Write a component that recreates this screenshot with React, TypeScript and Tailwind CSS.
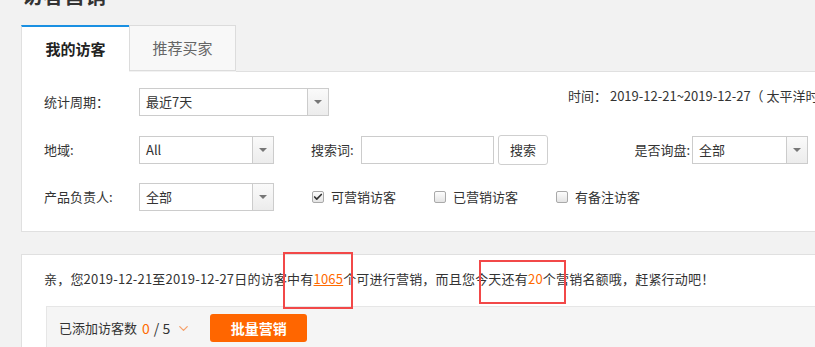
import { Check, ChevronDown } from 'lucide-react'

// Native-looking select with the grey arrow box on the right
function Select({ value, width }: { value: string; width: string }) {
  return (
    <div className={`flex h-[28px] ${width} border border-[#cccccc] bg-white`}>
      <div className="flex flex-1 items-center pl-[6px] text-[13px] text-[#333]">{value}</div>
      <div className="flex w-[21px] items-center justify-center border-l border-[#cccccc] bg-gradient-to-b from-[#fafafa] to-[#ececec]">
        <span className="h-0 w-0 border-x-[4px] border-t-[4px] border-x-transparent border-t-[#777]" />
      </div>
    </div>
  )
}

function CheckItem({ label, checked }: { label: string; checked?: boolean }) {
  return (
    <div className="flex w-[122px] items-center">
      <span className="flex h-[12px] w-[12px] items-center justify-center rounded-[2px] border border-[#a9a9a9] bg-gradient-to-b from-[#fdfdfd] to-[#e4e4e4]">
        {checked && <Check className="h-[10px] w-[10px] text-[#333]" strokeWidth={4} />}
      </span>
      <span className="ml-[7px] text-[13px] text-[#333]">{label}</span>
    </div>
  )
}

export default function App() {
  return (
    <div
      className="relative h-[347px] w-[815px] overflow-hidden bg-[#f2f2f2]"
      style={{ fontFamily: '"Noto Sans CJK SC", "Noto Sans", sans-serif' }}
    >
      {/* page title, cut off at the top */}
      <h1 className="ml-[22px] mt-[-20px] h-[45px] text-[21px] font-bold leading-[28px] text-[#333]">访客营销</h1>

      {/* --- filter panel --- */}
      <div className="ml-[21px] w-[900px]">
        <div className="flex h-[47px]">
          <div className="flex w-[108px] items-center justify-center border-l border-t-2 border-l-[#e0e0e0] border-t-[#1a90e2] bg-white text-[15px] font-bold text-[#222]">
            我的访客
          </div>
          <div className="flex h-[46px] w-[107px] items-center justify-center border border-[#dcdcdc] bg-[#f8f8f8] text-[15px] text-[#666]">
            推荐买家
          </div>
          <div className="flex-1 border-b border-[#e0e0e0]" />
        </div>

        <div className="h-[160px] border-x border-b border-[#e0e0e0] bg-white pl-[22px] pt-[16px]">
          <div className="flex items-start">
            <div className="flex h-[28px] w-[95px] items-center text-[13px] text-[#333]">统计周期：</div>
            <Select value="最近7天" width="w-[190px]" />
            <div className="ml-[239px] mt-[-2px] whitespace-nowrap text-[13px] leading-[20px] text-[#333]">
              时间： 2019-12-21~2019-12-27（ 太平洋时间）
            </div>
          </div>

          <div className="mt-[19px] flex items-center">
            <div className="w-[95px] text-[13px] text-[#333]">地域:</div>
            <Select value="All" width="w-[135px]" />
            <div className="ml-[37px] w-[50px] text-[13px] text-[#333]">搜索词:</div>
            <div className="h-[28px] w-[133px] border border-[#cccccc]" />
            <div className="ml-[4px] flex h-[30px] w-[50px] items-center justify-center rounded-[3px] border border-[#cfcfcf] bg-white text-[13px] text-[#333]">
              搜索
            </div>
            <div className="w-[144px] pr-[2px] text-right text-[13px] text-[#333]">是否询盘:</div>
            <Select value="全部" width="w-[116px]" />
          </div>

          <div className="mt-[18px] flex items-center">
            <div className="w-[95px] text-[13px] text-[#333]">产品负责人:</div>
            <Select value="全部" width="w-[135px]" />
            <div className="ml-[38px] flex">
              <CheckItem label="可营销访客" checked />
              <CheckItem label="已营销访客" />
              <CheckItem label="有备注访客" />
            </div>
          </div>
        </div>
      </div>

      {/* --- summary panel --- */}
      <div className="ml-[21px] mt-[22px] h-[120px] w-[900px] border border-[#e0e0e0] bg-white pl-[22px] pt-[14px]">
        <p className="whitespace-nowrap text-[13px] leading-[20px] tracking-[0.2px] text-[#333]">
          亲，您2019-12-21至2019-12-27日的访客中有
          <span className="text-[#ff6a00] underline">1065</span>
          个可进行营销，而且您今天还有<span className="text-[#ff6a00]">20</span>个营销名额哦，赶紧行动吧！
        </p>
        <div className="ml-[2px] mt-[17px] flex h-[50px] items-start border border-[#e6e6e6] bg-[#f5f5f5] pl-[12px] pt-[7px]">
          <div className="flex h-[28px] items-center text-[13px] text-[#333]">
            已添加访客数<span className="ml-[5px] text-[14px] text-[#ff6a00]">0</span>
            <span className="ml-[4px] text-[14px]">/ 5</span>
            <ChevronDown className="ml-[6px] h-[15px] w-[15px] text-[#f5a06a]" strokeWidth={2} />
          </div>
          <button className="ml-[19px] h-[28px] w-[97px] rounded-[3px] bg-[#ff6600] text-[14px] font-bold text-white">
            批量营销
          </button>
        </div>
      </div>

      {/* annotation boxes */}
      <div className="absolute left-[283px] top-[252px] h-[57px] w-[70px] border-2 border-[#f24848]" />
      <div className="absolute left-[479px] top-[260px] h-[44px] w-[87px] border-2 border-[#f24848]" />
    </div>
  )
}
